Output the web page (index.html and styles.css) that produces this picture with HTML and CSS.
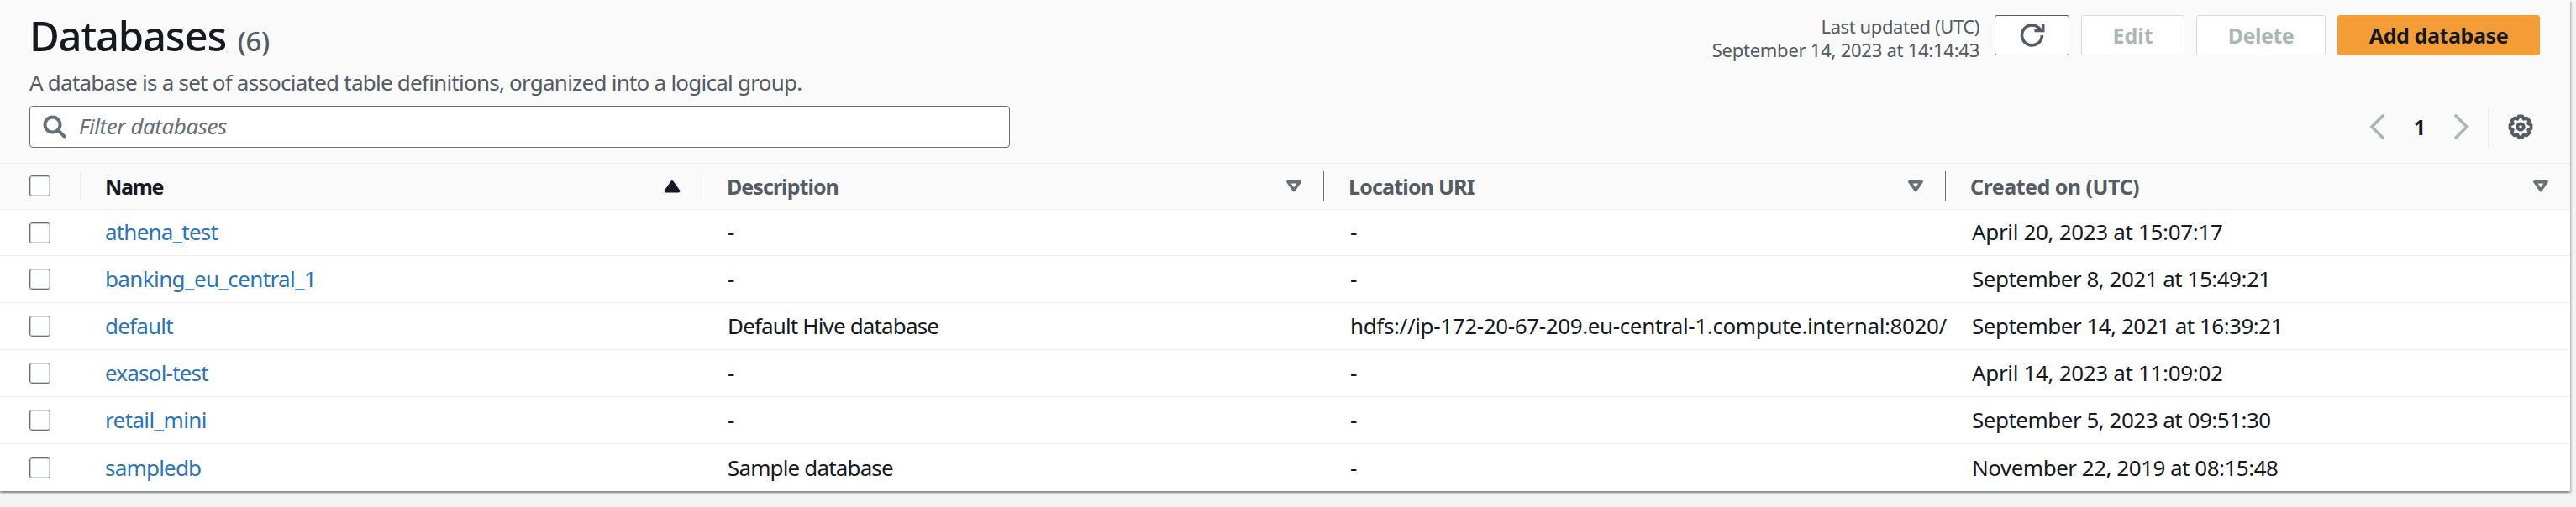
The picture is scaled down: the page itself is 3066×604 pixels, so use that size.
FILE: index.html
```html
<!DOCTYPE html>
<html lang="en">
<head>
<meta charset="utf-8">
<title>Databases</title>
<link rel="stylesheet" href="styles.css">
</head>
<body>
<main class="panel">
  <header class="panel-header">
    <div class="title-row">
      <div class="heading">
        <h1 class="title"><span class="title-text">Databases</span> <span class="count">(6)</span></h1>
        <p class="subtitle">A database is a set of associated table definitions, organized into a logical group.</p>
      </div>
      <div class="actions">
        <div class="updated"><div class="updated-label">Last updated (UTC)</div><div class="updated-time">September 14, 2023 at 14:14:43</div></div>
        <button class="btn btn-refresh" aria-label="Refresh"><svg class="icon" viewBox="0 0 32 32" width="32" height="32"><path d="M27.500 16A12 12 0 1 1 24.500 8L28 11"/><path d="M28.700 2v8.500H18.500"/></svg></button>
        <button class="btn btn-edit" disabled>Edit</button>
        <button class="btn btn-delete" disabled>Delete</button>
        <button class="btn btn-primary">Add database</button>
      </div>
    </div>
    <div class="tools">
      <label class="search"><svg class="icon magnifier" viewBox="0 0 28 28" width="28" height="28"><circle cx="11.500" cy="11.500" r="9"/><path d="M18 18l7.500 7.500" stroke-linecap="round"/></svg><span class="placeholder">Filter databases</span></label>
      <nav class="pager">
        <svg class="chevron" viewBox="0 0 18 30" width="18" height="30"><path d="M16 2L3 15l13 13"/></svg>
        <span class="page">1</span>
        <svg class="chevron" viewBox="0 0 18 30" width="18" height="30"><path d="M2 2l13 13L2 28"/></svg>
        <span class="rule"></span>
        <svg class="gear" viewBox="-16 -16 32 32" width="32" height="32"><path d="M-2.200-12.500H2.200L3.800-9.200 7.300-10.400 10.400-7.300 9.200-3.800 12.500-2.200V2.200L9.200 3.800 10.400 7.300 7.300 10.400 3.800 9.200 2.200 12.500H-2.200L-3.800 9.200-7.300 10.400-10.400 7.300-9.200 3.800-12.500 2.200V-2.200L-9.200-3.800-10.400-7.300-7.300-10.400-3.800-9.200z"/><circle r="3.700"/></svg>
      </nav>
    </div>
  </header>
  <div class="table">
    <div class="row head">
      <div class="check"><span class="box"></span></div>
      <div class="cell sorted"><span class="t-name">Name</span><svg class="sort" viewBox="0 0 20 16" width="20" height="16"><path class="solid" d="M10 3L17.500 13.500h-15z"/></svg></div>
      <div class="cell"><span class="t-desc">Description</span><svg class="sort" viewBox="0 0 20 16" width="20" height="16"><path d="M3 2.500h14L10 12.500z"/></svg></div>
      <div class="cell"><span class="t-loc">Location URI</span><svg class="sort" viewBox="0 0 20 16" width="20" height="16"><path d="M3 2.500h14L10 12.500z"/></svg></div>
      <div class="cell"><span class="t-created">Created on (UTC)</span><svg class="sort" viewBox="0 0 20 16" width="20" height="16"><path d="M3 2.500h14L10 12.500z"/></svg></div>
    </div>
    <div class="row first"><div class="check"><span class="box"></span></div><div class="cell name"><a>athena_test</a></div><div class="cell desc">-</div><div class="cell uri">-</div><div class="cell date short">April 20, 2023 at 15:07:17</div></div>
    <div class="row"><div class="check"><span class="box"></span></div><div class="cell name name-long"><a>banking_eu_central_1</a></div><div class="cell desc">-</div><div class="cell uri">-</div><div class="cell date">September 8, 2021 at 15:49:21</div></div>
    <div class="row"><div class="check"><span class="box"></span></div><div class="cell name"><a>default</a></div><div class="cell desc">Default Hive database</div><div class="cell uri">hdfs://ip-172-20-67-209.eu-central-1.compute.internal:8020/</div><div class="cell date">September 14, 2021 at 16:39:21</div></div>
    <div class="row"><div class="check"><span class="box"></span></div><div class="cell name"><a>exasol-test</a></div><div class="cell desc">-</div><div class="cell uri">-</div><div class="cell date short">April 14, 2023 at 11:09:02</div></div>
    <div class="row"><div class="check"><span class="box"></span></div><div class="cell name name-long"><a>retail_mini</a></div><div class="cell desc">-</div><div class="cell uri">-</div><div class="cell date">September 5, 2023 at 09:51:30</div></div>
    <div class="row"><div class="check"><span class="box"></span></div><div class="cell name"><a>sampledb</a></div><div class="cell desc">Sample database</div><div class="cell uri">-</div><div class="cell date">November 22, 2019 at 08:15:48</div></div>
  </div>
</main>
</body>
</html>
```
FILE: styles.css
```css
* { box-sizing: border-box; }
body { margin: 0; width: 3066px; height: 604px; overflow: hidden; background: #f2f3f3; font-family: "Noto Sans", sans-serif; font-size: 26px; line-height: 36px; color: #16191f; }
.panel { width: 3059px; height: 585px; background: #fff; box-shadow: 0 2px 2px 0 rgba(0,28,36,.3), 2px 2px 2px 0 rgba(0,28,36,.15), -2px 2px 2px 0 rgba(0,28,36,.15); }
.panel-header { height: 194px; padding: 0 36px 0 35px; background: #fafafa; }
.title-row { display: flex; justify-content: space-between; height: 126px; }
.title { margin: 0; padding-top: 12px; height: 80px; font-size: 49px; line-height: 60px; font-weight: 500; white-space: nowrap; }
.title-text { letter-spacing: -1.200px; }
.count { font-size: 33px; font-weight: 500; color: #545b64; letter-spacing: -.5px; margin-left: 1px; }
.subtitle { margin: 0; color: #545b64; white-space: nowrap; letter-spacing: -.76px; }
.actions { display: flex; align-items: flex-start; padding-top: 18px; }
.updated { margin: -1px 18px 0 0; text-align: right; font-size: 22px; line-height: 28px; color: #545b64; white-space: nowrap; }
.updated-label { letter-spacing: -.4px; }
.updated-time { letter-spacing: -.25px; }
.btn { display: flex; align-items: center; justify-content: center; flex: none; height: 48px; padding: 0 0 1px; margin: 0 0 0 14px; border: 1px solid #d5dbdb; border-radius: 3px; background: #fff; color: #aab7b8; font: 700 25px/36px "Noto Sans", sans-serif; white-space: nowrap; }
.btn-refresh { width: 89px; margin: 0; padding: 0; border-color: #545b64; }
.btn-edit { width: 123px; }
.btn-delete { width: 154px; letter-spacing: -.5px; }
.btn-primary { width: 241px; border-color: #f49d37; background: #f49d37; color: #16191f; letter-spacing: -.4px; }
.icon, .chevron, .gear, .sort { display: block; fill: none; stroke: #545b64; stroke-width: 3.6; }
.tools { display: flex; justify-content: space-between; height: 50px; }
.search { display: flex; align-items: center; width: 1167px; height: 50px; padding-left: 15px; border: 1px solid #687078; border-radius: 4px; background: #fff; }
.magnifier { stroke: #687078; stroke-width: 4; }
.placeholder { margin-left: 15px; padding-bottom: 2px; font-style: italic; color: #687078; letter-spacing: -.45px; }
.pager { display: flex; align-items: center; padding-right: 7px; }
.chevron { stroke: #aab7b8; stroke-width: 3.6; stroke-linecap: round; }
.page { width: 83px; padding-left: 1px; text-align: center; font-weight: 700; font-size: 25px; }
.rule { width: 1px; height: 50px; margin: 0 22px; background: #eaeded; }
.gear { stroke-width: 3.800; stroke-linejoin: round; }
.table { border-top: 1px solid #eaeded; }
.row { display: grid; grid-template-columns: 96px 740px 740px 740px 743px; height: 56px; border-bottom: 1px solid #eaeded; }
.first { height: 55px; }
.row:last-child { border-bottom: 0; }
.head { height: 55px; background: #fafafa; font-weight: 700; font-size: 25px; color: #545b64; }
.check { display: flex; align-items: center; padding-left: 35px; }
.head .check { padding-bottom: 1px; }
.box { width: 25px; height: 25px; border: 1px solid #687078; border-radius: 3px; background: #fff; box-shadow: inset 0 0 0 1px rgba(104,112,120,.35); }
.cell { display: flex; align-items: center; padding: 0 0 1px 31px; white-space: nowrap; }
.first .cell { padding-bottom: 3px; }
.head .check, .head .cell { height: 36px; margin-top: 9px; border-right: 1px solid #687078; }
.head .check { border-color: #eaeded; }
.head .cell { justify-content: space-between; padding: 0 25px 1px 29px; }
.head .cell:last-child { border: 0; }
.t-name { letter-spacing: -1.400px; }
.t-desc { letter-spacing: -.950px; }
.t-loc { letter-spacing: -.8px; }
.t-created { letter-spacing: -.5px; }
.head .sorted { color: #16191f; }
.sort { stroke-width: 3.800; stroke-linejoin: round; stroke: #687078; }
.solid { fill: #16191f; stroke: #16191f; }
.name { color: #2b74b8; letter-spacing: -.8px; padding-left: 29px; }
.name-long { letter-spacing: -.62px; }
.desc { letter-spacing: -.85px; padding-left: 30px; }
.uri { letter-spacing: -.37px; }
.date { letter-spacing: -.5px; }
.short { letter-spacing: -.33px; }
```
